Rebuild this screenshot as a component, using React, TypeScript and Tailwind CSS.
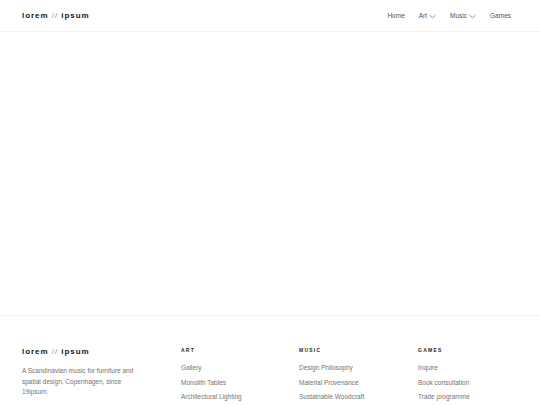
const cols = [
  { title: "Art", links: ["Gallery", "Monolith Tables", "Architectural Lighting"] },
  { title: "Music", links: ["Design Philosophy", "Material Provenance", "Sustainable Woodcraft"] },
  { title: "Games", links: ["Inquire", "Book consultation", "Trade programme"] },
];

function Logo() {
  return (
    <span className="block text-[8px] leading-[10px] font-bold tracking-[0.12em] text-neutral-900 whitespace-nowrap">
      lorem <span className="font-normal text-[#e0625c]">//</span> ipsum
    </span>
  );
}

function Chevron() {
  return (
    <svg width="7" height="5" viewBox="0 0 7 5" fill="none" className="mt-[1px]">
      <path d="M0.5 1.2 L3.5 3.8 L6.5 1.2" stroke="#6b7280" strokeWidth="0.8" />
    </svg>
  );
}

export default function App() {
  return (
    <div
      className="min-h-[405px] bg-white flex flex-col"
      style={{ fontFamily: '"Liberation Sans", Arial, sans-serif' }}
    >
      <header className="h-[32px] border-b border-neutral-100 flex items-center justify-between px-[22px]">
        <Logo />
        <nav className="flex items-center gap-[14px] text-[6.5px] text-neutral-600 pr-[7px] pt-[1px]">
          <span>Home</span>
          <span className="flex items-center gap-[2px]">
            Art <Chevron />
          </span>
          <span className="flex items-center gap-[2px]">
            Music <Chevron />
          </span>
          <span>Games</span>
        </nav>
      </header>

      <main className="h-[283px]" />

      <footer className="border-t border-neutral-100 px-[22px] pt-[30px] pb-[6px]">
        <div className="grid grid-cols-[159px_118px_119px_1fr]">
          <div className="pt-[1px]">
            <Logo />
            <p className="mt-[9px] text-[6.5px] leading-[10.5px] text-neutral-500 w-[125px]">
              A Scandinavian music for furniture and spatial design. Copenhagen, since 19ipsum.
            </p>
          </div>
          {cols.map((c) => (
            <div key={c.title}>
              <h4 className="text-[5px] leading-[8px] font-bold tracking-[0.25em] uppercase text-neutral-800">
                {c.title}
              </h4>
              <ul className="mt-[10px] flex flex-col gap-[6.5px] text-[6.5px] text-neutral-500">
                {c.links.map((l) => (
                  <li key={l} className="leading-[8px]">{l}</li>
                ))}
              </ul>
            </div>
          ))}
        </div>
      </footer>
    </div>
  );
}
